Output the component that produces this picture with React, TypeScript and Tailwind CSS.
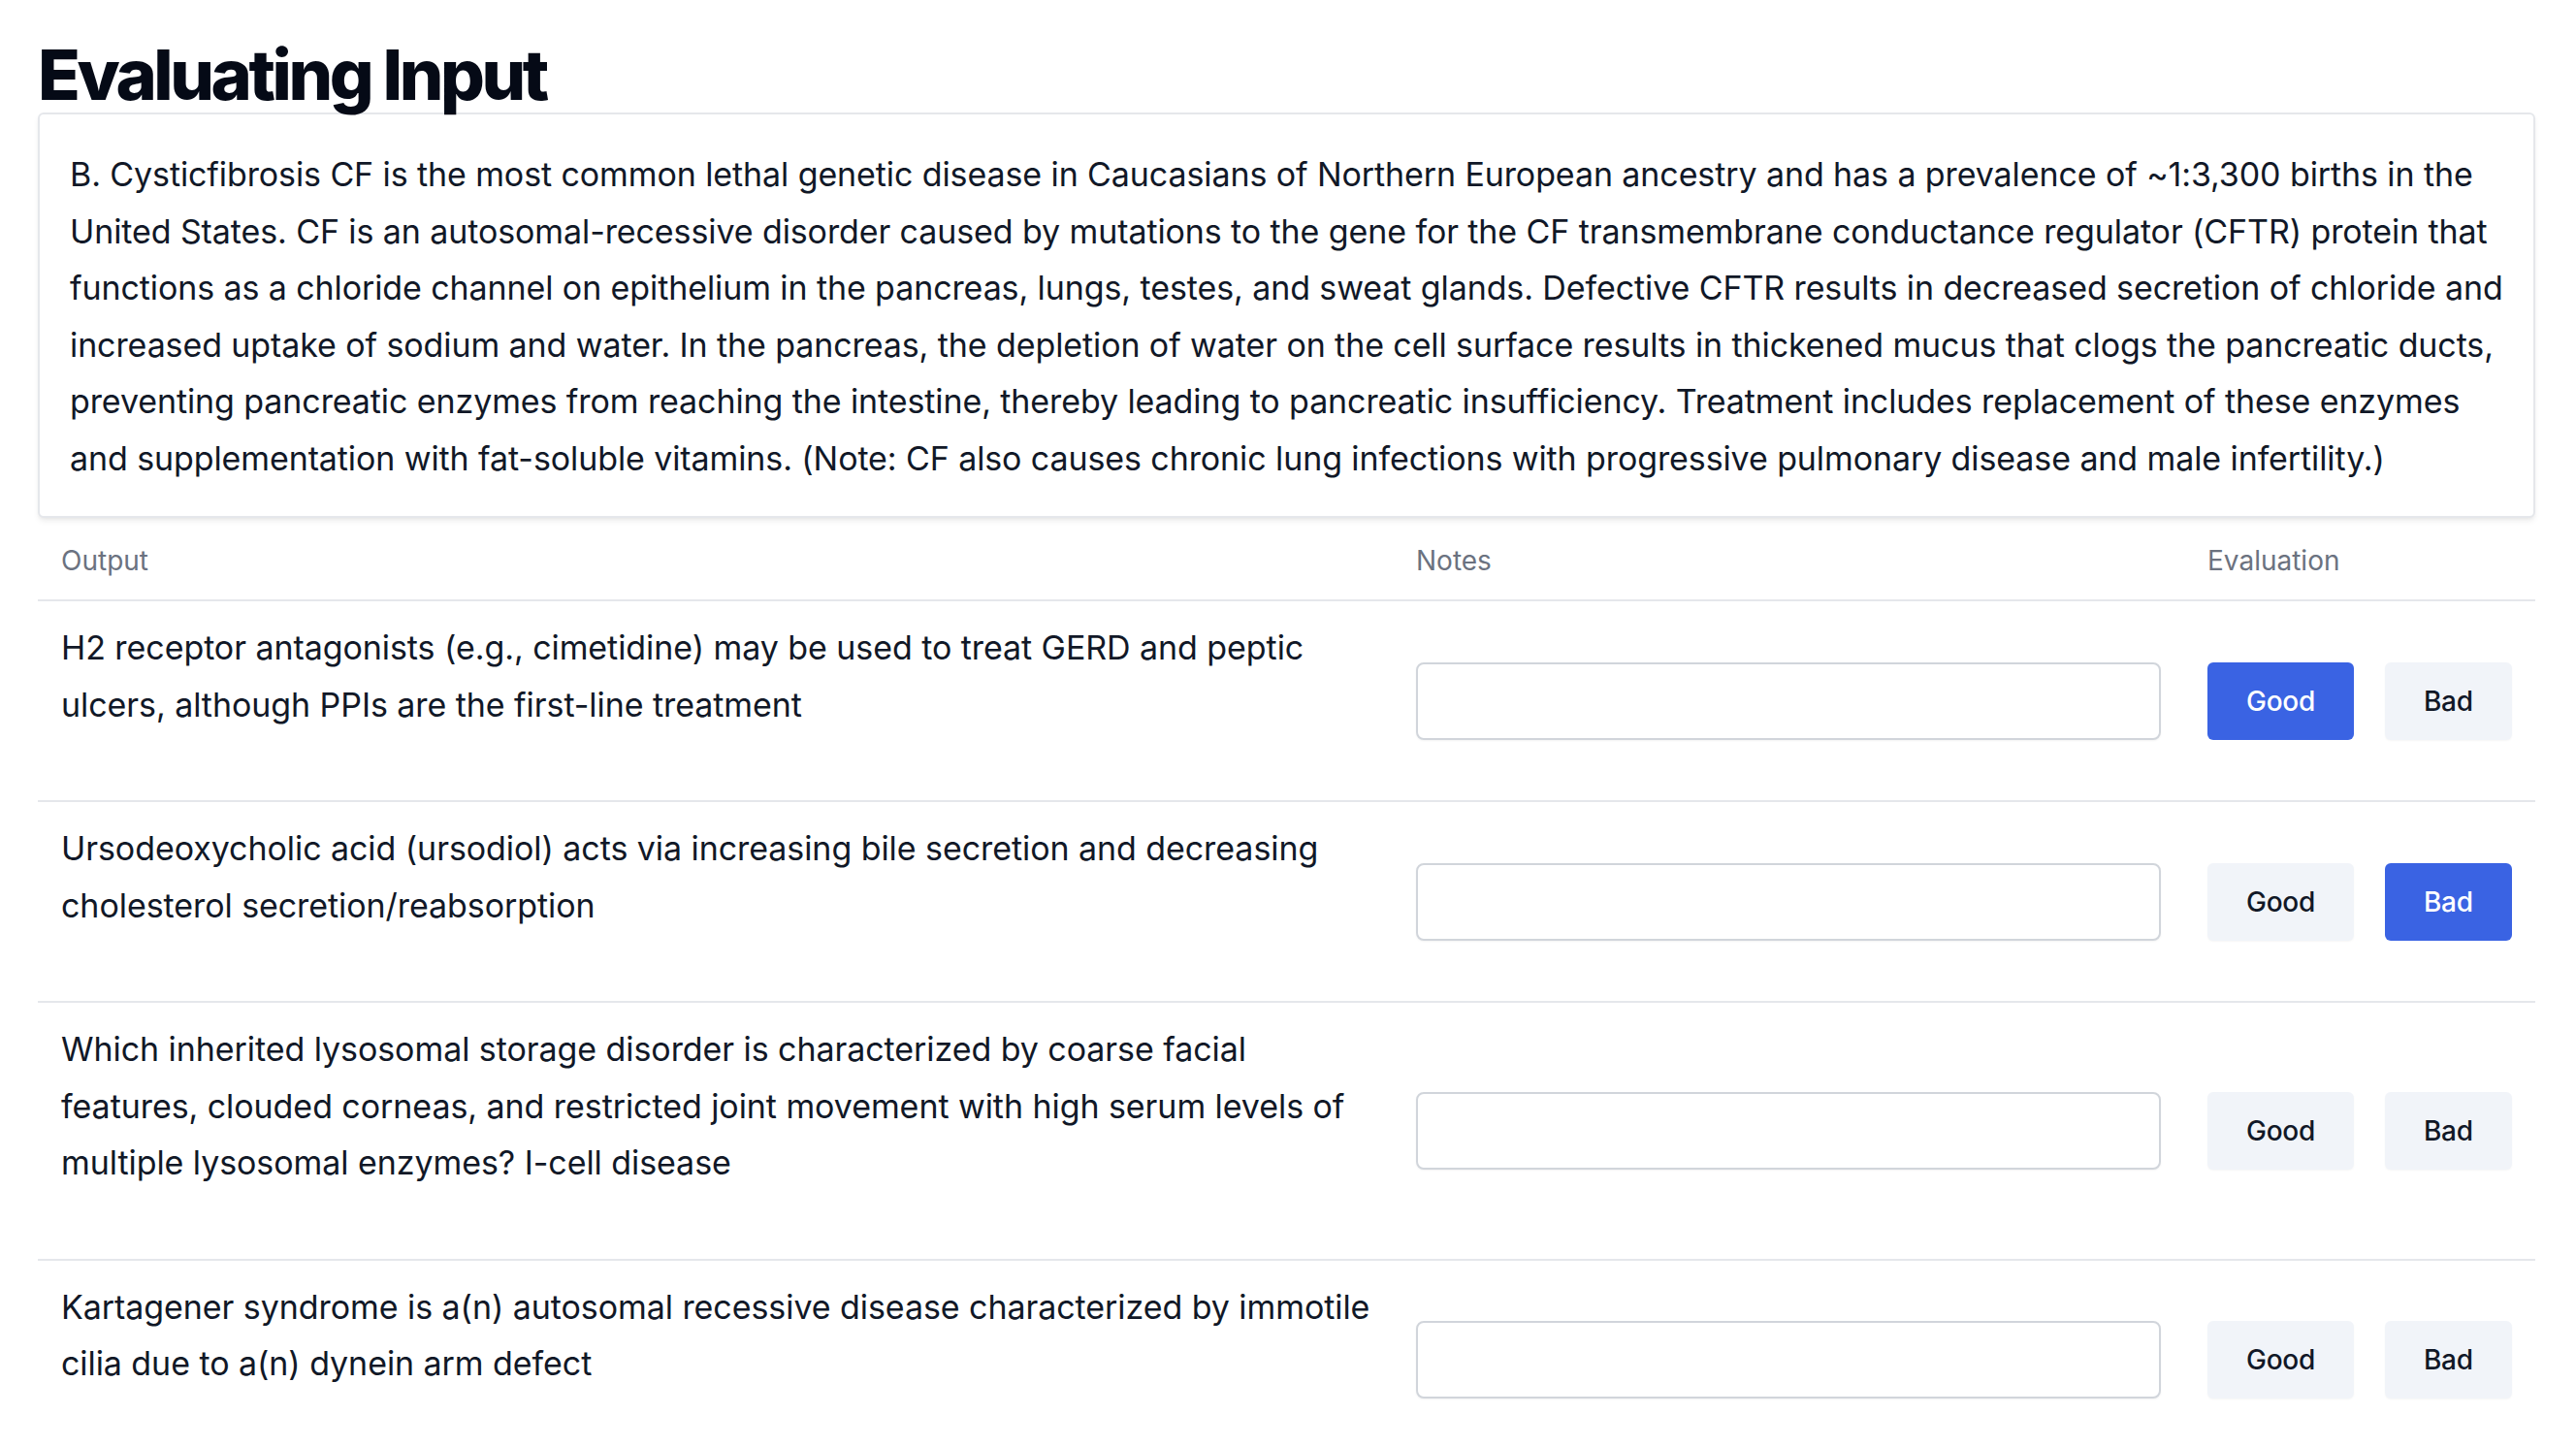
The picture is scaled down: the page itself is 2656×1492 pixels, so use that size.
import React from "react";

type Row = { lines: string[]; sel: "good" | "bad" | null };

const cardLines = [
  "B. Cysticfibrosis CF is the most common lethal genetic disease in Caucasians of Northern European ancestry and has a prevalence of ~1:3,300 births in the",
  "United States. CF is an autosomal-recessive disorder caused by mutations to the gene for the CF transmembrane conductance regulator (CFTR) protein that",
  "functions as a chloride channel on epithelium in the pancreas, lungs, testes, and sweat glands. Defective CFTR results in decreased secretion of chloride and",
  "increased uptake of sodium and water. In the pancreas, the depletion of water on the cell surface results in thickened mucus that clogs the pancreatic ducts,",
  "preventing pancreatic enzymes from reaching the intestine, thereby leading to pancreatic insufficiency. Treatment includes replacement of these enzymes",
  "and supplementation with fat-soluble vitamins. (Note: CF also causes chronic lung infections with progressive pulmonary disease and male infertility.)",
];

const rows: Row[] = [
  {
    lines: [
      "H2 receptor antagonists (e.g., cimetidine) may be used to treat GERD and peptic",
      "ulcers, although PPIs are the first-line treatment",
    ],
    sel: "good",
  },
  {
    lines: [
      "Ursodeoxycholic acid (ursodiol) acts via increasing bile secretion and decreasing",
      "cholesterol secretion/reabsorption",
    ],
    sel: "bad",
  },
  {
    lines: [
      "Which inherited lysosomal storage disorder is characterized by coarse facial",
      "features, clouded corneas, and restricted joint movement with high serum levels of",
      "multiple lysosomal enzymes? I-cell disease",
    ],
    sel: null,
  },
  {
    lines: [
      "Kartagener syndrome is a(n) autosomal recessive disease characterized by immotile",
      "cilia due to a(n) dynein arm defect",
    ],
    sel: null,
  },
];

function EvalButton({ label, active }: { label: string; active: boolean }) {
  return (
    <button
      className={
        active
          ? "rounded-[6px] bg-[#3a63e3] px-[40px] py-[20px] text-[28px] leading-[40px] font-medium tracking-[-0.01em] text-white"
          : "rounded-[6px] bg-[#f1f4f9] px-[40px] py-[20px] text-[28px] leading-[40px] font-medium tracking-[-0.01em] text-[#111827] shadow-[0_1px_2px_rgba(0,0,0,0.04)]"
      }
    >
      {label}
    </button>
  );
}

export default function App() {
  return (
    <div
      className="min-h-screen bg-white text-[#111827]"
      style={{ fontFamily: "Inter, 'Noto Sans', sans-serif" }}
    >
      <div className="ml-[39px] w-[2575px]">
        <h1 className="pt-[38px] text-[72px] leading-[78px] font-extrabold tracking-[-0.048em] text-[#050a16]">
          Evaluating Input
        </h1>
        <div className="rounded-[6px] border-2 border-[#e5e7eb] bg-white px-[31px] pt-[33px] pb-[30px] shadow-[0_4px_6px_-1px_rgba(0,0,0,0.08),0_2px_4px_-2px_rgba(0,0,0,0.06)]">
          <p className="text-[34px] leading-[58.5px] tracking-[-0.003em] text-[#111827]">
            {cardLines.map((l, i) => (
              <span key={i} className="block whitespace-nowrap">
                {l}
              </span>
            ))}
          </p>
        </div>

        <div className="grid grid-cols-[1397px_816px_362px] border-b-2 border-[#e5e7eb] pt-[24px] pb-[20px] text-[28px] leading-[40px] text-[#6b7280]">
          <div className="px-[24px]">Output</div>
          <div className="px-[24px]">Notes</div>
          <div className="px-[24px]">Evaluation</div>
        </div>

        {rows.map((r, i) => (
          <div
            key={i}
            className="grid grid-cols-[1397px_816px_362px] items-center border-b-2 border-[#e5e7eb]"
          >
            <div className="self-start px-[24px] pt-[19px] pb-[69px] text-[34px] leading-[58.5px] tracking-[-0.002em] text-[#111827]">
              {r.lines.map((l, j) => (
                <span key={j} className="block whitespace-nowrap">
                  {l}
                </span>
              ))}
            </div>
            <div className="px-[24px]">
              <input
                type="text"
                className="block h-[80px] w-full rounded-[8px] border-2 border-[#d1d5db] bg-white px-[20px] text-[28px] shadow-[0_1px_2px_rgba(0,0,0,0.05)] outline-none"
              />
            </div>
            <div className="flex gap-[32px] px-[24px]">
              <EvalButton label="Good" active={r.sel === "good"} />
              <EvalButton label="Bad" active={r.sel === "bad"} />
            </div>
          </div>
        ))}
      </div>
    </div>
  );
}
